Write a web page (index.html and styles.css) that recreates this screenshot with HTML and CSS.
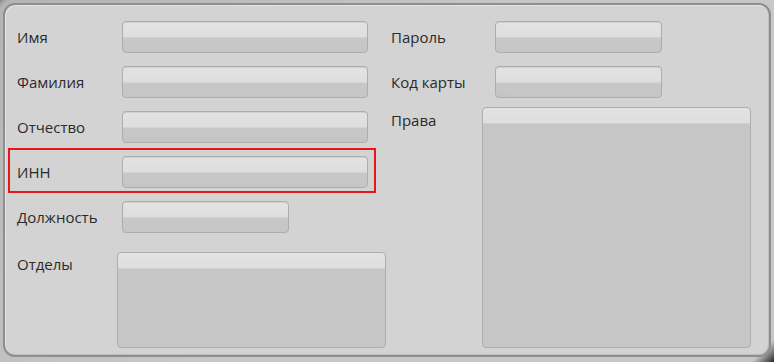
FILE: index.html
```html
<!DOCTYPE html>
<html lang="ru">
<head>
<meta charset="utf-8">
<title>Форма</title>
<link rel="stylesheet" href="styles.css">
</head>
<body>
<div class="frame">
  <div class="panel">
    <div class="col left">
      <div class="row"><span class="label">Имя</span><span class="input wide"></span></div>
      <div class="row"><span class="label">Фамилия</span><span class="input wide"></span></div>
      <div class="row"><span class="label">Отчество</span><span class="input wide"></span></div>
      <div class="row selected"><span class="label">ИНН</span><span class="input wide"></span></div>
      <div class="row"><span class="label">Должность</span><span class="input short"></span></div>
      <div class="row list-row"><span class="label">Отделы</span><div class="listbox dept"></div></div>
    </div>
    <div class="col right">
      <div class="row"><span class="label">Пароль</span><span class="input short"></span></div>
      <div class="row"><span class="label">Код карты</span><span class="input short"></span></div>
      <div class="row list-row rights-row"><span class="label">Права</span><div class="listbox rights"></div></div>
    </div>
  </div>
</div>
</body>
</html>
```

FILE: styles.css
```css
html, body {
  margin: 0;
  padding: 0;
}
body {
  width: 774px;
  height: 362px;
  background: #c4c4c4;
  font-family: "Open Sans", "DejaVu Sans", sans-serif;
  font-size: 15px;
  color: #2a2a2a;
  overflow: hidden;
}
.frame {
  width: 774px;
  height: 362px;
  box-sizing: border-box;
  padding: 3px 3px 5px 3px;
  background: linear-gradient(135deg, #8a8a8a 0, #b4b4b4 6px, #c8c8c8 50%, #c8c8c8 98%, #2a2a2a 100%);
}
.panel {
  box-sizing: border-box;
  height: 354px;
  border: 2px solid #8e8e8e;
  border-radius: 12px;
  background: #d3d3d3;
  box-shadow: inset 1px 1px 0 #e4e4e4, inset -1px -1px 0 #bdbdbd;
  padding: 8px 0 0 3px;
  display: flex;
}
.col {
  display: flex;
  flex-direction: column;
}
.left {
  width: 368px;
  flex: none;
}
.right {
  margin-left: 6px;
  width: 375px;
  flex: none;
}
.row {
  box-sizing: border-box;
  height: 45px;
  display: flex;
  align-items: flex-start;
  padding: 6px 0 0 7px;
  border: 2px solid transparent;
}
.row.selected {
  border-color: #e8161b;
}
.label {
  width: 105px;
  flex: none;
  line-height: 32px;
}
.right .label {
  width: 104px;
}
.input {
  display: block;
  flex: none;
  box-sizing: border-box;
  height: 32px;
  border: 1px solid #adadad;
  border-radius: 4px;
  background: linear-gradient(#e3e3e3 0, #dedede 15px, #c8c8c8 16px, #c5c5c5 100%);
  box-shadow: inset 0 1px 0 #d0d0d0;
}
.wide {
  width: 246px;
}
.short {
  width: 167px;
}
.list-row {
  height: auto;
  padding-top: 12px;
}
.left .list-row .label {
  width: 100px;
  line-height: 24px;
}
.listbox {
  flex: none;
  box-sizing: border-box;
  border: 1px solid #adadad;
  border-radius: 4px;
  background: linear-gradient(#e3e3e3 0, #dedede 15px, #c6c6c6 16px, #c6c6c6 100%);
}
.dept {
  width: 269px;
  height: 96px;
}
.rights-row {
  padding-top: 2px;
}
.rights-row .label {
  width: 91px;
  line-height: 26px;
}
.rights {
  width: 269px;
  height: 241px;
}
```
